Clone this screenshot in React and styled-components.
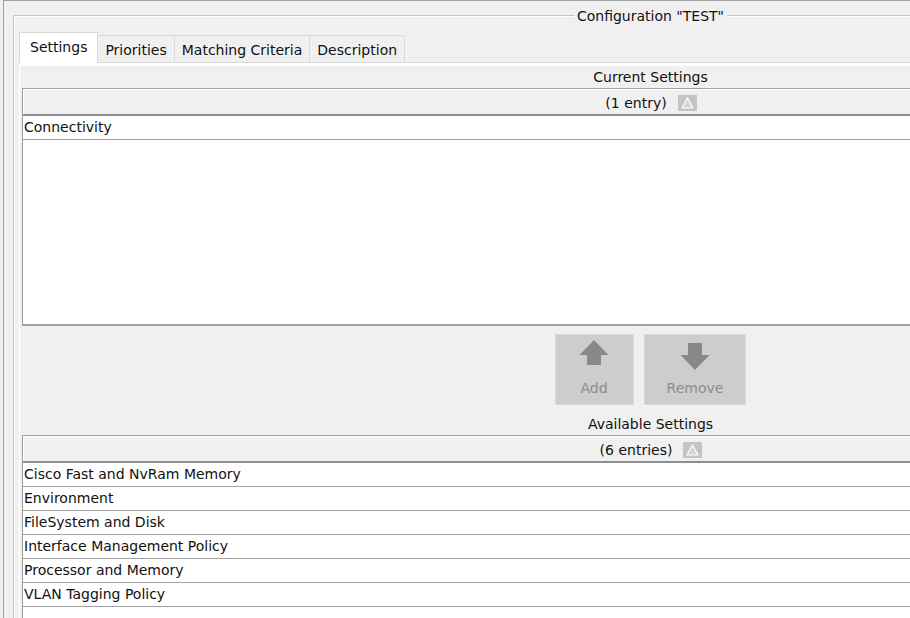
import React from "react";
import styled, { createGlobalStyle } from "styled-components";

const GlobalStyle = createGlobalStyle`
  html, body {
    margin: 0;
    padding: 0;
    background: #f0f0f0;
    overflow: hidden;
  }
  body {
    font-family: "DejaVu Sans", "Liberation Sans", sans-serif;
    font-size: 14px;
    color: #000;
  }
`;

const Frame = styled.div`
  width: calc(100vw - 3px);
  height: 100vh;
  box-sizing: border-box;
  overflow: hidden;
  margin-left: 3px;
  border-top: 1px solid #a0a0a0;
  border-left: 1px solid #a0a0a0;
  padding: 14px 0 0 9px;
`;

const TitledBox = styled.section`
  position: relative;
  width: 1275px;
  height: 660px;
  box-sizing: border-box;
  border: 1px solid #c5c5c5;
  box-shadow: inset 1px 1px 0 #fff;
  padding: 16px 6px 0 5px;
`;

const Title = styled.h2`
  position: absolute;
  top: -8px;
  left: 50%;
  transform: translateX(-50%);
  margin: 0;
  padding: 0 3px;
  background: #f0f0f0;
  font-size: 14px;
  font-weight: normal;
  line-height: 16px;
  white-space: nowrap;
  color: #111;
`;

const TabStrip = styled.div`
  display: flex;
  align-items: flex-end;
  height: 30px;
  border-bottom: 1px solid #d9d9d9;
`;

const Tab = styled.div`
  position: relative;
  z-index: ${(p) => (p.$active ? 1 : 0)};
  box-sizing: border-box;
  height: ${(p) => (p.$active ? "31px" : "27px")};
  margin-bottom: ${(p) => (p.$active ? "-1px" : "0")};
  margin-left: ${(p) => (p.$first ? "0" : "-1px")};
  padding: ${(p) => (p.$active ? "3px 10px 0" : "3px 7px 0")};
  border: 1px solid #d9d9d9;
  border-bottom: none;
  background: ${(p) => (p.$active ? "#fff" : "#f0f0f0")};
  line-height: 22px;
  white-space: nowrap;
  color: #111;
`;

const Panel = styled.div`
  border-top: 3px solid #fff;
  border-left: 1px solid #fff;
  padding: 0 2px;
`;

const SectionLabel = styled.div`
  height: 22px;
  line-height: 22px;
  text-align: center;
  color: #111;
  margin-top: ${(p) => p.$gap || 0}px;
`;

const Table = styled.div`
  border-left: 1px solid #a0a0a0;
`;

const HeaderBar = styled.div`
  box-sizing: border-box;
  height: 28px;
  display: flex;
  justify-content: center;
  align-items: center;
  gap: 11px;
  padding-top: 3px;
  background: #f0f0f0;
  border-top: 1px solid #a0a0a0;
  border-bottom: 2px solid #8e8e8e;
  box-shadow: inset 1px 1px 0 #fff;
  line-height: 22px;
  color: #111;
`;

const ListBody = styled.div`
  background: #fff;
  height: ${(p) => p.$height}px;
  border-bottom: ${(p) => (p.$closed ? "2px solid #a0a0a0" : "none")};
`;

const Row = styled.div`
  height: 23px;
  line-height: 23px;
  padding-left: 1px;
  border-bottom: 1px solid #a0a0a0;
  white-space: nowrap;
  color: #111;
`;

const ButtonRow = styled.div`
  display: flex;
  justify-content: center;
  gap: 10px;
  margin-top: 8px;
`;

const ActionButton = styled.div`
  box-sizing: border-box;
  height: 71px;
  min-width: 79px;
  display: flex;
  flex-direction: column;
  align-items: center;
  gap: 9px;
  padding: 4px 22px 0;
  background: #cdcdcd;
  border: 1px solid #d9d9d9;
  color: #8c8c8c;
  line-height: 16px;
`;

const SortIcon = () => (
  <svg width="19" height="16" viewBox="0 0 19 16">
    <rect x="0" y="0" width="19" height="16" fill="#c4c4c4" />
    <polygon
      points="9.5,3 15,13 4,13"
      fill="#d6d6d6"
      stroke="#ffffff"
      strokeWidth="1.2"
      strokeLinejoin="round"
    />
  </svg>
);

const UpArrow = () => (
  <svg width="30" height="32" viewBox="0 0 30 32">
    <path d="M15 1 L29.5 16 H22 V26 H8 V16 H0.5 Z" fill="#888888" />
  </svg>
);

const DownArrow = () => (
  <svg width="30" height="32" viewBox="0 0 30 32">
    <path d="M8 4 H22 V16 H29.5 L15 31 L0.5 16 H8 Z" fill="#888888" />
  </svg>
);

const tabs = ["Settings", "Priorities", "Matching Criteria", "Description"];

const available = [
  "Cisco Fast and NvRam Memory",
  "Environment",
  "FileSystem and Disk",
  "Interface Management Policy",
  "Processor and Memory",
  "VLAN Tagging Policy",
];

export default function App() {
  return (
    <>
      <GlobalStyle />
      <Frame>
        <TitledBox>
          <Title>Configuration "TEST"</Title>
          <TabStrip>
            {tabs.map((t, i) => (
              <Tab key={t} $active={i === 0} $first={i === 0}>
                {t}
              </Tab>
            ))}
          </TabStrip>
          <Panel>
            <SectionLabel>Current Settings</SectionLabel>
            <Table>
              <HeaderBar>
                <span>(1 entry)</span>
                <SortIcon />
              </HeaderBar>
              <ListBody $height={208} $closed>
                <Row>Connectivity</Row>
              </ListBody>
            </Table>
            <ButtonRow>
              <ActionButton>
                <UpArrow />
                <span>Add</span>
              </ActionButton>
              <ActionButton>
                <DownArrow />
                <span>Remove</span>
              </ActionButton>
            </ButtonRow>
            <SectionLabel $gap={8}>Available Settings</SectionLabel>
            <Table>
              <HeaderBar>
                <span>(6 entries)</span>
                <SortIcon />
              </HeaderBar>
              <ListBody $height={200}>
                {available.map((a) => (
                  <Row key={a}>{a}</Row>
                ))}
              </ListBody>
            </Table>
          </Panel>
        </TitledBox>
      </Frame>
    </>
  );
}
